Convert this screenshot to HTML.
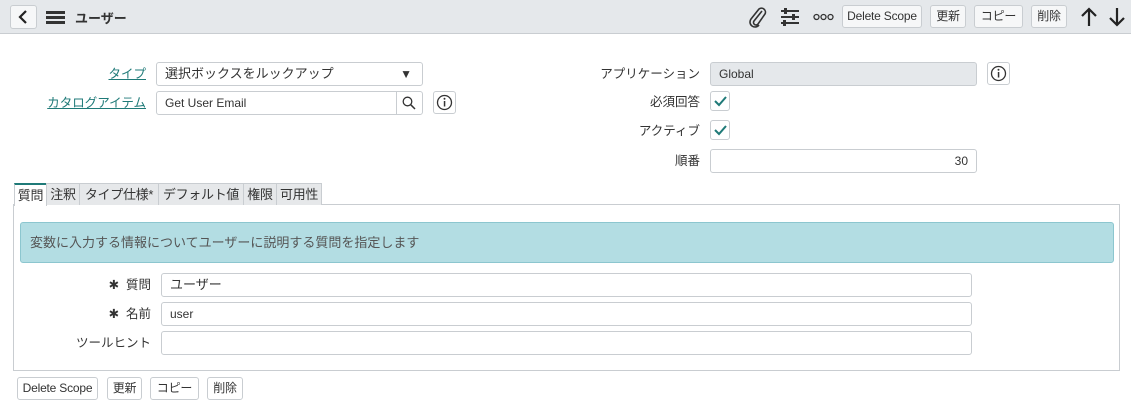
<!DOCTYPE html>
<html><head><meta charset="utf-8"><style>
*{box-sizing:border-box}
body{margin:0;width:1131px;height:416px;background:#fff;font-family:"Liberation Sans","Noto Sans CJK JP",sans-serif;font-size:13px;color:#333;position:relative;overflow:hidden}
.a{position:absolute}
.hdr{left:0;top:0;width:1131px;height:34px;background:#e5e8eb;border-bottom:1px solid #c9cdd1}
.btn{position:absolute;height:23px;border:1px solid #c9cdd1;border-radius:3px;background:#f6f7f8;font-size:12px;line-height:21px;text-align:center;color:#333;white-space:nowrap;letter-spacing:-0.2px}
.inp{position:absolute;height:24px;border:1px solid #c9cdd1;border-radius:3px;background:#fff;line-height:22px;padding-left:8px;font-size:12px}
.lbl{position:absolute;text-align:right;font-size:12.5px;line-height:24px;white-space:nowrap}
.lnk{color:#1f7a78;text-decoration:underline}
.cb{position:absolute;width:20px;height:20px;border:1px solid #c9cdd1;border-radius:3px;background:#fff}
.tab{position:absolute;top:183px;height:22px;border:1px solid #c9cdd1;border-bottom:none;background:#e6e8ea;font-size:13px;line-height:21px;text-align:center;white-space:nowrap;letter-spacing:-0.3px}
.info{position:absolute;width:23px;height:23px;border:1px solid #c9cdd1;border-radius:3px;background:#fff}
</style></head><body>
<div class="a hdr"></div>
<div class="btn" style="left:10px;top:5px;width:27px;height:24px"><svg width="25" height="22" viewBox="0 0 25 22"><path d="M15 5 L9 11 L15 17" stroke="#222" stroke-width="2.2" fill="none"/></svg></div>
<svg class="a" style="left:46px;top:10px" width="20" height="15"><rect x="0" y="1" width="19" height="3" fill="#333"/><rect x="0" y="6" width="19" height="3" fill="#333"/><rect x="0" y="11" width="19" height="3" fill="#333"/></svg>
<div class="a" style="left:75px;top:8px;font-size:13px;font-weight:bold;color:#333">ユーザー</div>
<svg class="a" style="left:748px;top:6px" width="20" height="22" viewBox="0 0 20 22"><path d="M14 5 L6 15 a2.5 2.5 0 0 0 4 3 L17 8 a4 4 0 0 0 -6 -5 L3 13 a5 5 0 0 0 8 6" stroke="#333" stroke-width="1.6" fill="none"/></svg>
<svg class="a" style="left:780px;top:8px" width="20" height="18"><g stroke="#333" stroke-width="2"><line x1="1" y1="3" x2="19" y2="3"/><line x1="1" y1="9" x2="19" y2="9"/><line x1="1" y1="15" x2="19" y2="15"/></g><rect x="4" y="0" width="3" height="6" fill="#333"/><rect x="12" y="6" width="3" height="6" fill="#333"/><rect x="3" y="12" width="3" height="6" fill="#333"/></svg>
<svg class="a" style="left:813px;top:13px" width="22" height="8"><g stroke="#333" stroke-width="1.3" fill="none"><circle cx="3.5" cy="4" r="2.5"/><circle cx="10.5" cy="4" r="2.5"/><circle cx="17.5" cy="4" r="2.5"/></g></svg>
<div class="btn" style="left:842px;top:5px;width:80px">Delete Scope</div>
<div class="btn" style="left:930px;top:5px;width:36px">更新</div>
<div class="btn" style="left:974px;top:5px;width:49px">コピー</div>
<div class="btn" style="left:1031px;top:5px;width:36px">削除</div>
<svg class="a" style="left:1080px;top:7px" width="18" height="20"><path d="M9 19 V2 M2 9 L9 2 L16 9" stroke="#222" stroke-width="2.2" fill="none"/></svg>
<svg class="a" style="left:1108px;top:7px" width="18" height="20"><path d="M9 1 V18 M2 11 L9 18 L16 11" stroke="#222" stroke-width="2.2" fill="none"/></svg>

<div class="lbl" style="left:40px;top:62px;width:106px"><span class="lnk">タイプ</span></div>
<div class="inp" style="left:156px;top:62px;width:267px;font-size:13px">選択ボックスをルックアップ<span class="a" style="right:10px;top:0;font-size:12px">▼</span></div>
<div class="lbl" style="left:20px;top:91px;width:126px"><span class="lnk">カタログアイテム</span></div>
<div class="inp" style="left:156px;top:91px;width:267px">Get User Email</div>
<div class="a" style="left:396px;top:92px;width:1px;height:22px;background:#c9cdd1"></div>
<svg class="a" style="left:402px;top:96px" width="14" height="14"><circle cx="5.5" cy="5.5" r="4.3" stroke="#333" stroke-width="1.3" fill="none"/><line x1="8.7" y1="8.7" x2="13" y2="13" stroke="#333" stroke-width="1.5"/></svg>
<div class="info" style="left:433px;top:91px"><svg width="21" height="21"><circle cx="10.5" cy="10.5" r="7" stroke="#333" stroke-width="1.3" fill="none"/><rect x="9.8" y="9" width="1.5" height="5.5" fill="#333"/><circle cx="10.5" cy="6.8" r="1" fill="#333"/></svg></div>

<div class="lbl" style="left:560px;top:62px;width:140px">アプリケーション</div>
<div class="inp" style="left:710px;top:62px;width:267px;background:#e5e8eb">Global</div>
<div class="info" style="left:987px;top:62px"><svg width="21" height="21"><circle cx="10.5" cy="10.5" r="7" stroke="#333" stroke-width="1.3" fill="none"/><rect x="9.8" y="9" width="1.5" height="5.5" fill="#333"/><circle cx="10.5" cy="6.8" r="1" fill="#333"/></svg></div>
<div class="lbl" style="left:560px;top:90px;width:140px">必須回答</div>
<div class="cb" style="left:710px;top:91px"><svg width="18" height="18"><path d="M4 9 L8 13 L15 5" stroke="#1f7a78" stroke-width="2" fill="none"/></svg></div>
<div class="lbl" style="left:560px;top:119px;width:140px">アクティブ</div>
<div class="cb" style="left:710px;top:120px"><svg width="18" height="18"><path d="M4 9 L8 13 L15 5" stroke="#1f7a78" stroke-width="2" fill="none"/></svg></div>
<div class="lbl" style="left:560px;top:149px;width:140px">順番</div>
<div class="inp" style="left:710px;top:149px;width:267px;text-align:right;padding-right:8px">30</div>

<div class="a" style="left:13px;top:204px;width:1107px;height:167px;border:1px solid #c9cdd1"></div>
<div class="tab" style="left:14px;width:33px;background:#fff;border-top:2px solid #1f7a78;height:23px">質問</div>
<div class="tab" style="left:46px;width:34px">注釈</div>
<div class="tab" style="left:79px;width:80px">タイプ仕様*</div>
<div class="tab" style="left:158px;width:86px">デフォルト値</div>
<div class="tab" style="left:243px;width:34px">権限</div>
<div class="tab" style="left:276px;width:46px">可用性</div>

<div class="a" style="left:20px;top:222px;width:1094px;height:41px;background:#b3dde3;border:1px solid #8cc6cf;border-radius:3px;line-height:39px;padding-left:9px;color:#555;font-size:13px">変数に入力する情報についてユーザーに説明する質問を指定します</div>

<div class="lbl" style="left:60px;top:273px;width:91px">✱&nbsp; 質問</div>
<div class="inp" style="left:161px;top:273px;width:811px;font-size:13px">ユーザー</div>
<div class="lbl" style="left:60px;top:302px;width:91px">✱&nbsp; 名前</div>
<div class="inp" style="left:161px;top:302px;width:811px">user</div>
<div class="lbl" style="left:40px;top:331px;width:111px">ツールヒント</div>
<div class="inp" style="left:161px;top:331px;width:811px"></div>

<div class="btn" style="left:17px;top:377px;width:81px;background:#fff">Delete Scope</div>
<div class="btn" style="left:107px;top:377px;width:35px;background:#fff">更新</div>
<div class="btn" style="left:150px;top:377px;width:49px;background:#fff">コピー</div>
<div class="btn" style="left:207px;top:377px;width:36px;background:#fff">削除</div>
</body></html>
